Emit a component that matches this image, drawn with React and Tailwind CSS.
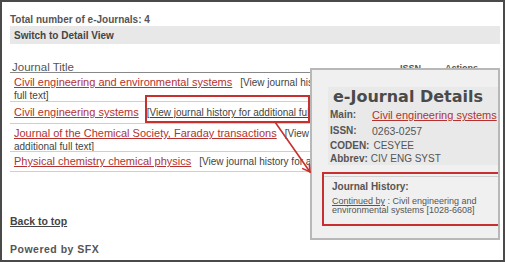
import React from "react";

const rows = [
  { title: "Civil engineering and environmental systems", first: "[View journal history for additional", rest: "full text]", h: "h-[29px] pt-[3px]" },
  { title: "Civil engineering systems", first: "[View journal history for additional full text]", hot: true, h: "h-[22px] pt-[4px]" },
  { title: "Journal of the Chemical Society, Faraday transactions", first: "[View journal history for", rest: "additional full text]", h: "h-[28px] pt-[3px]" },
  { title: "Physical chemistry chemical physics", first: "[View journal history for additional full text]", h: "h-[20px] pt-[3px]" },
];

export default function App() {
  return (
    <div className="w-[505px] h-[262px] border-2 border-[#4a4a4a] bg-white relative overflow-hidden font-['Liberation_Sans',Arial,sans-serif] text-[#555]">
      <div className="pl-[8px] pr-[3px] pt-[12px]">
        <p className="text-[10px] font-bold leading-[12px] h-[12px] text-[#555]">Total number of e-Journals: 4</p>
        <div className="h-[18px] bg-[#e8e8e8] flex items-center px-[4px] text-[10px] font-bold text-[#444]">
          Switch to Detail View
        </div>

        {/* table header */}
        <div className="mt-[16px] h-[13px] flex items-start border-b border-[#888] text-[#555]">
          <span className="w-[390px] pl-[2px] pt-[1px] text-[11.5px] leading-[12px]">Journal Title</span>
          <span className="w-[45px] pt-[2px] text-[9px] font-bold leading-[12px]">ISSN</span>
          <span className="pt-[2px] text-[9px] font-bold leading-[12px]">Actions</span>
        </div>

        {rows.map((r) => (
          <div key={r.title} className={`${r.h} border-b border-[#cfcfcf] pl-[4px] text-[11px] leading-[12px] whitespace-nowrap overflow-hidden`}>
            <a href="#" className="text-[11px] text-[#b3322f] underline">{r.title}</a>
            <span className={`ml-[8px] text-[10px] text-[#444] ${r.hot ? "underline" : ""}`}>{r.first}</span>
            {r.rest && (
              <>
                <br />
                <span className="text-[10px] text-[#444]">{r.rest}</span>
              </>
            )}
          </div>
        ))}

        <a href="#" className="block mt-[43px] text-[10.5px] font-bold underline text-[#444] leading-[12px]">Back to top</a>
        <p className="mt-[16px] text-[10.5px] tracking-[0.5px] font-bold text-[#555] leading-[12px]">Powered by SFX</p>
      </div>

      {/* e-Journal details popup */}
      <div className="absolute left-[308px] top-[66px] w-[190px] h-[172px] bg-[#f0f0f0] border-2 border-[#b8b8b8] overflow-hidden">
        <div className="ml-[16px] mt-[17px] bg-[#e9e9e9] pl-[2px] text-[#555]">
          <h2 className="h-[20px] pl-[3px] leading-[20px] font-['DejaVu_Sans',Verdana,sans-serif] text-[16px] font-bold text-[#4a4a4a] whitespace-nowrap">e-Journal Details</h2>
          <div className="h-[16px] flex items-center text-[10px] leading-[12px]">
            <span className="w-[42px] font-bold">Main:</span>
            <a href="#" className="text-[11px] text-[#b3322f] underline whitespace-nowrap">Civil engineering systems</a>
          </div>
          <div className="h-[15px] flex items-center text-[10px] leading-[12px]">
            <span className="w-[42px] font-bold">ISSN:</span>
            <span className="text-[10.5px]">0263-0257</span>
          </div>
          <div className="h-[14px] flex items-center text-[10px] leading-[11px]">
            <span className="font-bold mr-[4px]">CODEN:</span>
            <span>CESYEE</span>
          </div>
          <div className="h-[13px] flex items-center text-[10px] leading-[11px]">
            <span className="font-bold mr-[3px]">Abbrev:</span>
            <span>CIV ENG SYST</span>
          </div>
        </div>
        <div className="ml-[10px] mt-[7px] w-[200px] h-[54px] border-2 border-[#c8302f] pt-[2px]">
          <div className="border-t border-[#d0d0d0] pl-[8px] pt-[3px] text-[#555]">
            <p className="text-[10px] font-bold leading-[14px]">Journal History:</p>
            <p className="mt-[3px] text-[9px] leading-[9px]">
              <span className="underline">Continued by</span> : Civil engineering and
              <br />
              environmental systems [1028-6608]
            </p>
          </div>
        </div>
      </div>

      {/* highlight box on row 2 */}
      <div className="absolute left-[143px] top-[93px] w-[165px] h-[28px] border-2 border-[#c8302f]" />

      {/* arrow */}
      <svg className="absolute left-0 top-0 pointer-events-none" width="501" height="258" viewBox="0 0 501 258">
        <g stroke="#c8302f" strokeWidth="1.6" fill="none" strokeLinecap="round">
          <path d="M273 120 L308 170" />
          <path d="M307.3 162 L308 170 L300.8 166.6" />
        </g>
      </svg>
    </div>
  );
}
